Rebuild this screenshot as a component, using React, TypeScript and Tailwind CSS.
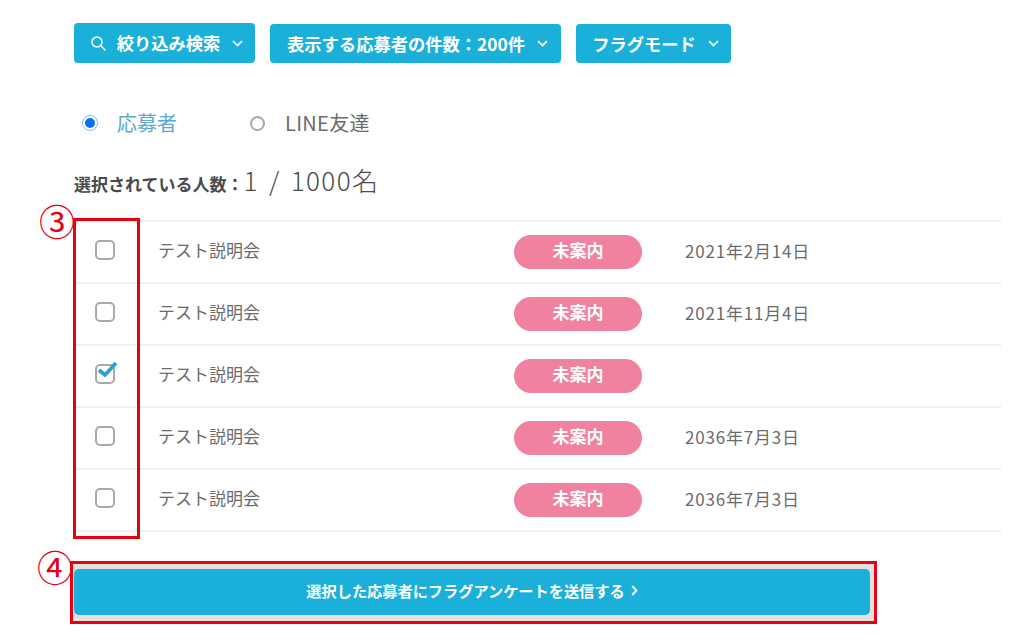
import React from "react";

const jp = { fontFamily: '"Noto Sans CJK JP", "Noto Sans", sans-serif' };

function Chevron() {
  return (
    <svg width="11" height="7" viewBox="0 0 11 7" fill="none" stroke="currentColor" strokeWidth="1.8" className="shrink-0">
      <path d="M1 1.2 L5.5 5.4 L10 1.2" />
    </svg>
  );
}

function Btn({ label, w, h, search }: { label: string; w: string; h: string; search?: boolean }) {
  return (
    <div className={`${w} ${h} pl-[4px] rounded-[4px] bg-[#1bb0d9] text-white flex items-center justify-center gap-[12px] text-[17.3px] font-bold`}>
      <span className="flex items-center gap-[10px]">
        {search && (
          <svg width="17" height="17" viewBox="0 0 17 17" fill="none" stroke="currentColor" strokeWidth="1.5">
            <circle cx="7" cy="7" r="5" />
            <path d="M10.8 10.8 L15.5 15.5" />
          </svg>
        )}
        {label}
      </span>
      <Chevron />
    </div>
  );
}

function Row({ date, checked }: { date: string; checked?: boolean }) {
  return (
    <div className="h-[62px] border-b-2 border-[#efefef] flex items-center text-[#6b6b6b]">
      <div className="w-[84px] shrink-0 pl-[21px] relative h-[20px] mb-[4px]">
        <div className="w-[20px] h-[20px] rounded-[5px] border-2 border-[#a9a9a9] bg-white" />
        {checked && (
          <svg width="24" height="20" viewBox="0 0 24 20" className="absolute left-[22px] top-[-4px]" fill="none" stroke="#2b9fd2" strokeWidth="3.6">
            <path d="M3 10 L9 15 L20 3" />
          </svg>
        )}
      </div>
      <div className="w-[356px] shrink-0 text-[17px] pb-[4px]">テスト説明会</div>
      <div className="w-[128px] h-[34px] shrink-0 rounded-full bg-[#f082a0] text-white font-bold text-[17px] flex items-center justify-center pb-[5px]">未案内</div>
      <div className="ml-[43px] text-[17px] tracking-[0.8px] pb-[3px]">{date}</div>
    </div>
  );
}

export default function App() {
  return (
    <div className="w-[1032px] h-[642px] bg-white relative overflow-hidden pl-[74px] pt-[23px]" style={jp}>
      <div className="flex gap-[15px] items-end">
        <Btn label="絞り込み検索" w="w-[181px]" h="h-[40px]" search />
        <Btn label="表示する応募者の件数：200件" w="w-[291px]" h="h-[39px]" />
        <Btn label="フラグモード" w="w-[155px]" h="h-[39px]" />
      </div>

      <div className="flex items-center mt-[42px] h-[36px] text-[20px] text-[#6b6b6b]">
        <div className="ml-[8px] w-[16px] h-[16px] rounded-full border border-[#8fb8f0] bg-white flex items-center justify-center">
          <div className="w-[10px] h-[10px] rounded-full bg-[#0b6ff0]" />
        </div>
        <span className="ml-[19px] text-[#5aa9cf]">応募者</span>
        <div className="ml-[73px] w-[15px] h-[15px] rounded-full border-2 border-[#a8a8a8] bg-white" />
        <span className="ml-[20px] tracking-[0.3px]">LINE友達</span>
      </div>

      <div className="flex items-baseline mt-[19px] h-[36px] text-[#4a4a4a]">
        <span className="text-[17px] font-bold">選択されている人数：</span>
        <span className="text-[26px] font-light tracking-[1.4px] [word-spacing:3px]">1 / 1000名</span>
      </div>

      <div className="w-[927px] mt-[24px] border-t-2 border-[#efefef]">
        <Row date="2021年2月14日" />
        <Row date="2021年11月4日" />
        <Row date="" checked />
        <Row date="2036年7月3日" />
        <Row date="2036年7月3日" />
      </div>

      <div className="w-[807px] h-[63px] mt-[29px] -ml-[4px] border-[3px] border-[#e60012] bg-[#e3e0e0] pl-[1px] pr-[4px] pt-[5px] pb-[6px]">
        <div className="h-full rounded-[5px] bg-[#1bb0d9] text-white text-[15.2px] font-bold flex items-center justify-center gap-[6px] pb-[4px]">
          選択した応募者にフラグアンケートを送信する
          <svg width="7" height="11" viewBox="0 0 7 11" fill="none" stroke="currentColor" strokeWidth="2">
            <path d="M1.2 1 L5.4 5.5 L1.2 10" />
          </svg>
        </div>
      </div>

      {/* annotations */}
      <div className="absolute left-[73px] top-[218px] w-[67px] h-[321px] border-[3px] border-[#e60012]" />
      <div className="absolute left-[37px] top-[196px] w-[40px] h-[48px] text-[#e60012] text-[36px] leading-[48px] text-center">③</div>
      <div className="absolute left-[35px] top-[542px] w-[40px] h-[48px] text-[#e60012] text-[36px] leading-[48px] text-center">④</div>
    </div>
  );
}
